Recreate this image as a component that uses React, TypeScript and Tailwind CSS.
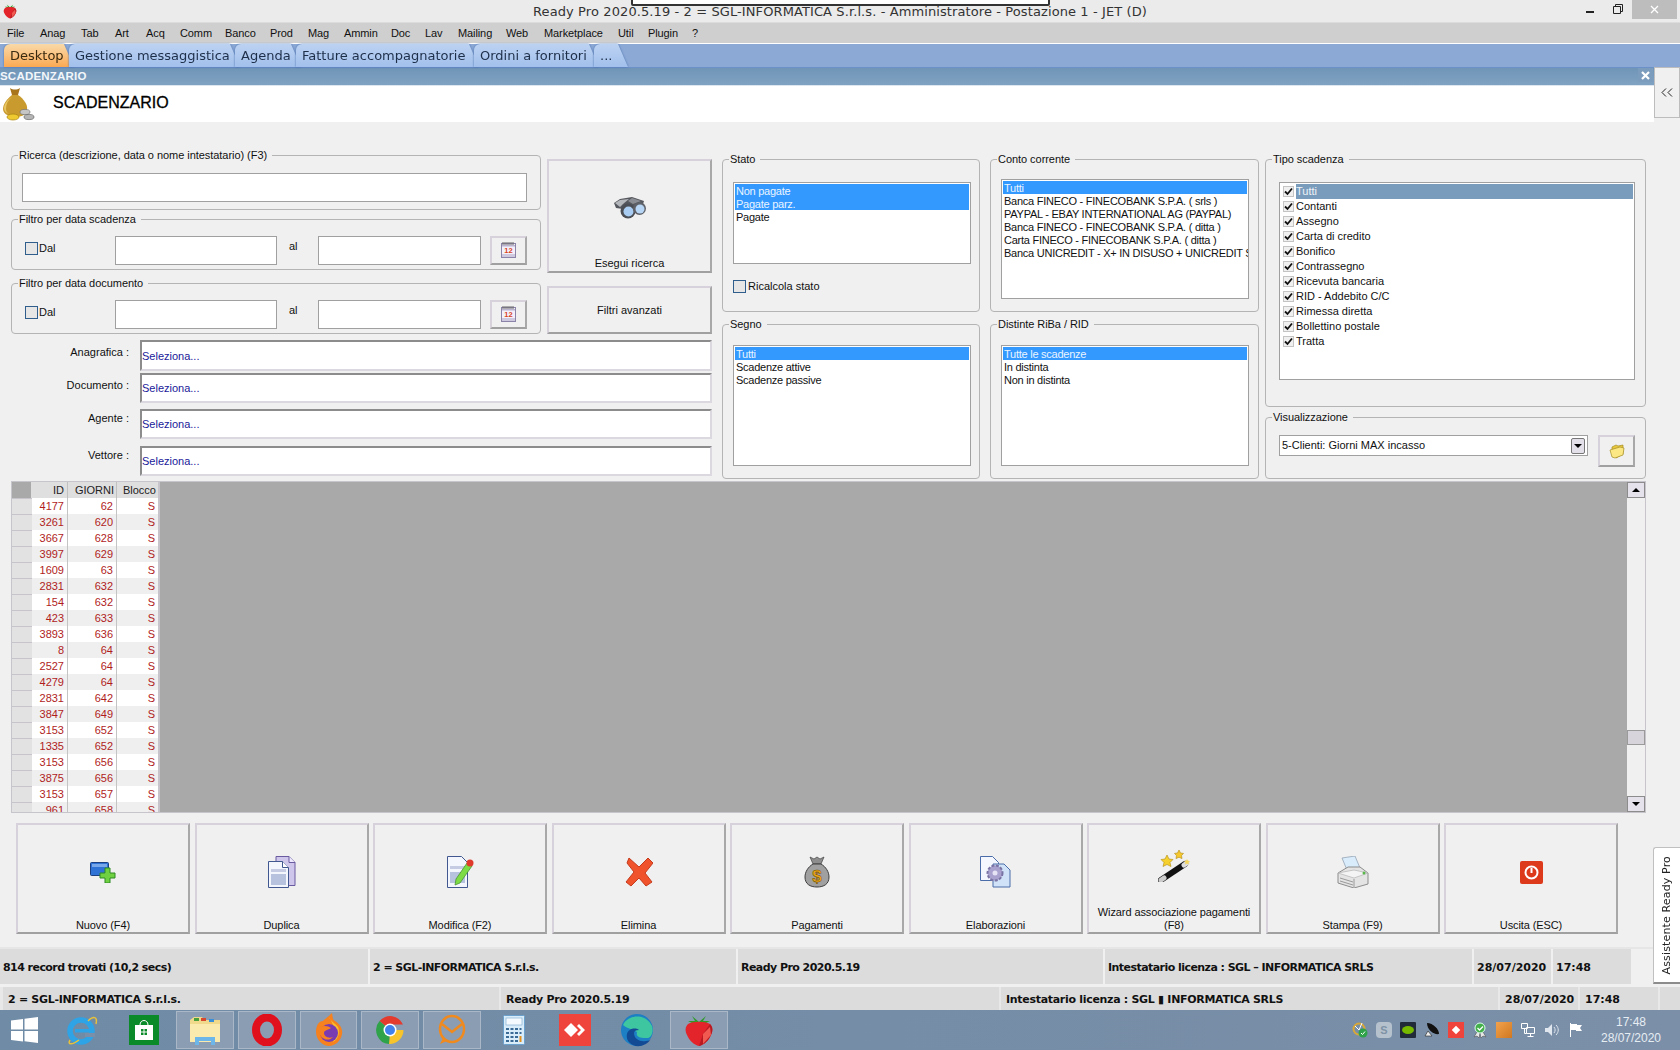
import type { ReactNode } from 'react'

const sans = "[font-family:'Liberation_Sans',sans-serif]"
const wide = "[font-family:'DejaVu_Sans',sans-serif]"

const menuItems = [
  { label: 'File', w: 'w-[33px]' },
  { label: 'Anag', w: 'w-[41px]' },
  { label: 'Tab', w: 'w-[34px]' },
  { label: 'Art', w: 'w-[31px]' },
  { label: 'Acq', w: 'w-[34px]' },
  { label: 'Comm', w: 'w-[45px]' },
  { label: 'Banco', w: 'w-[45px]' },
  { label: 'Prod', w: 'w-[38px]' },
  { label: 'Mag', w: 'w-[36px]' },
  { label: 'Ammin', w: 'w-[47px]' },
  { label: 'Doc', w: 'w-[34px]' },
  { label: 'Lav', w: 'w-[33px]' },
  { label: 'Mailing', w: 'w-[48px]' },
  { label: 'Web', w: 'w-[38px]' },
  { label: 'Marketplace', w: 'w-[74px]' },
  { label: 'Util', w: 'w-[30px]' },
  { label: 'Plugin', w: 'w-[44px]' },
  { label: '?', w: 'w-[20px]' },
]

const tabs = [
  { label: 'Desktop', w: 'w-[70px]', active: true },
  { label: 'Gestione messaggistica', w: 'w-[171px]' },
  { label: 'Agenda', w: 'w-[66px]' },
  { label: 'Fatture accompagnatorie', w: 'w-[183px]' },
  { label: 'Ordini a fornitori', w: 'w-[125px]' },
  { label: '...', w: 'w-[34px]' },
]

const rows = [
  ['4177', '62'], ['3261', '620'], ['3667', '628'], ['3997', '629'], ['1609', '63'],
  ['2831', '632'], ['154', '632'], ['423', '633'], ['3893', '636'], ['8', '64'],
  ['2527', '64'], ['4279', '64'], ['2831', '642'], ['3847', '649'], ['3153', '652'],
  ['1335', '652'], ['3153', '656'], ['3875', '656'], ['3153', '657'], ['961', '658'],
]

const tipi = ['Tutti', 'Contanti', 'Assegno', 'Carta di credito', 'Bonifico', 'Contrassegno', 'Ricevuta bancaria', 'RID - Addebito C/C', 'Rimessa diretta', 'Bollettino postale', 'Tratta']

function Strawberry({ size = 16 }: { size?: number }) {
  return (
    <svg width={size} height={size} viewBox="0 0 32 34">
      <path d="M16 9 9 3l3 5-7 0 6 3Zm0 0 7-6-3 5 7 0-6 3Z" fill="#2f9a2a" />
      <path d="M5 11c5-3 17-3 22 0 3 3 3 7 1 11-2 5-7 10-12 11C11 32 6 27 4 22 2 18 2 14 5 11Z" fill="#e3242b" />
      <path d="M27 11c3 3 3 7 1 11-2 5-7 10-12 11l4-12Z" fill="#b81a22" />
      <path d="M20 21 27 14l1 8-8 9Z" fill="#f05a50" />
    </svg>
  )
}

function GoldBag() {
  return (
    <svg width="34" height="34" viewBox="0 0 34 34">
      <path d="M9 1c3 2 7 2 10 0l-2 7h-6Z" fill="#a8741c" />
      <path d="M11 8h6c6 4 10 10 9 15-1 5-6 7-11 7S2 28 2 22c0-5 4-10 9-14Z" fill="#c99a2e" />
      <path d="M11 10C7 13 5 17 5 22c0 2 1 4 3 5-3-1-5-3-5-6 0-4 4-9 8-11Z" fill="#e8c664" />
      <ellipse cx="12" cy="30" rx="6" ry="3" fill="#eec92f" stroke="#a88410" strokeWidth=".7" />
      <ellipse cx="24" cy="25" rx="5" ry="2.6" fill="#c6c6c6" stroke="#777" strokeWidth=".7" />
      <ellipse cx="28" cy="30" rx="5" ry="2.6" fill="#b5b5b5" stroke="#666" strokeWidth=".7" />
    </svg>
  )
}

function Binoculars() {
  return (
    <svg width="32" height="22" viewBox="0 0 32 22">
      <path d="M0 6 6 2l12-2 12 4-2 6-12 4-7-2-7-1Z" fill="#55585e" />
      <path d="M1 6 6 3l9-1-6 5-3 3Z" fill="#b4b7bc" />
      <path d="M18 1l9 3-8 3-5-3Z" fill="#8a8d93" />
      <circle cx="14" cy="14" r="7.500" fill="#4b4e55" />
      <circle cx="14.500" cy="14.500" r="5" fill="#a9cdf2" />
      <circle cx="25.500" cy="11.500" r="6.500" fill="#5e6168" />
      <circle cx="26" cy="12" r="4.500" fill="#b7d5f5" />
    </svg>
  )
}

function CalendarIcon() {
  return (
    <svg width="15" height="17" viewBox="0 0 15 17">
      <rect x=".5" y="2.5" width="14" height="14" fill="#f4f0fa" stroke="#8c84a8" />
      <path d="M2 1v3M4 1v3M6 1v3M8 1v3M10 1v3M12 1v3" stroke="#666" />
      <rect x="1" y="4" width="13" height="1.5" fill="#b9b3cf" />
      <text x="7.5" y="12" fontSize="7.5" fontWeight="700" textAnchor="middle" fill="#d8431e" fontFamily="Liberation Sans">12</text>
      <rect x="1" y="13" width="13" height="3" fill="#cfc9e0" />
    </svg>
  )
}

function FolderIcon() {
  return (
    <svg width="16" height="15" viewBox="0 0 16 15">
      <path d="M3 5 3 3l4-2 2 1 5-1v9l-7 4Z" fill="#e8c83e" stroke="#a58c22" strokeWidth=".7" />
      <path d="M1 6l10-3 4 1-1 7-8 3-3-1Z" fill="#fbe884" stroke="#a58c22" strokeWidth=".7" />
    </svg>
  )
}

const actions: { label: ReactNode; icon: ReactNode }[] = [
  {
    label: 'Nuovo (F4)',
    icon: (
      <svg width="26" height="21" viewBox="0 0 26 21">
        <rect x=".5" y=".5" width="18" height="13" rx="1" fill="#2f72d6" stroke="#1b3f80" />
        <rect x="2" y="2" width="15" height="3" fill="#79a8ea" />
        <path d="M15 6h5v5h5v5h-5v5h-5v-5h-5v-5h5Z" fill="#6fd142" stroke="#2f8a22" />
      </svg>
    ),
  },
  {
    label: 'Duplica',
    icon: (
      <svg width="28" height="32" viewBox="0 0 28 32">
        <path d="M8 .5h13l6 6v23H8Z" fill="#cfc6ec" stroke="#6a5aa0" />
        <path d="M21 .5v6h6" fill="#efeaff" stroke="#6a5aa0" />
        <path d="M.5 5.5h14l6 6v20H.5Z" fill="#f3f7fd" stroke="#40588f" />
        <path d="M14.5 5.5v6h6" fill="#fff" stroke="#40588f" />
        <rect x="3" y="13" width="15" height="3" fill="#c4cbe2" />
        <rect x="3" y="18" width="15" height="11" fill="#b7c2df" />
      </svg>
    ),
  },
  {
    label: 'Modifica (F2)',
    icon: (
      <svg width="27" height="32" viewBox="0 0 27 32">
        <path d="M.5.5h14l6 6v25H.5Z" fill="#f3f7fd" stroke="#40588f" />
        <rect x="3" y="10" width="15" height="3" fill="#c4cbe2" />
        <rect x="3" y="16" width="15" height="11" fill="#b7c2df" />
        <path d="M20 7l5 3L13 27l-5 2 1-6Z" fill="#7ddb45" stroke="#3d8a2a" strokeWidth=".7" />
        <circle cx="23" cy="7" r="3.500" fill="#df3a2c" />
      </svg>
    ),
  },
  {
    label: 'Elimina',
    icon: (
      <svg width="28" height="30" viewBox="0 0 28 30">
        <path d="M4 1 14 10 23 1l5 5-8 10 7 9-6 4-7-8-8 8-5-4 8-10L2 6Z" fill="#f0532c" stroke="#c53a1c" strokeLinejoin="round" />
      </svg>
    ),
  },
  {
    label: 'Pagamenti',
    icon: (
      <svg width="26" height="32" viewBox="0 0 26 32">
        <path d="M6 1l4 2 3-2 3 2 4-2-3 7H9Z" fill="#8e8e8e" stroke="#444" strokeWidth=".7" />
        <path d="M9 8h8c5 3 8 8 8 13 0 7-5 10-12 10S1 28 1 21c0-5 3-10 8-13Z" fill="#a0a0a0" stroke="#3e3e3e" />
        <text x="13" y="26" fontSize="17" fontWeight="700" textAnchor="middle" fill="#f0a818" stroke="#6a4a00" strokeWidth=".5" fontFamily="Liberation Sans">$</text>
      </svg>
    ),
  },
  {
    label: 'Elaborazioni',
    icon: (
      <svg width="31" height="32" viewBox="0 0 31 32">
        <path d="M.5.5h12l6 6v18H.5Z" fill="#f4f8fe" stroke="#4a6ca8" />
        <path d="M13 8h11l6 6v17H13Z" fill="#cfe2f8" stroke="#4a6ca8" />
        <circle cx="15" cy="17" r="7.500" fill="#a9a2cf" stroke="#7a74a4" strokeDasharray="3 1.5" strokeWidth="2" />
        <circle cx="15" cy="17" r="2.500" fill="#e6e3f4" />
      </svg>
    ),
  },
  {
    label: <>Wizard associazione pagamenti<br />(F8)</>,
    icon: (
      <svg width="32" height="32" viewBox="0 0 32 32">
        <path d="M3 30 27 14" stroke="#111" strokeWidth="6" strokeLinecap="round" />
        <path d="M3 30 6 28" stroke="#ccc" strokeWidth="5" strokeLinecap="round" />
        <path d="M26 15l3-2" stroke="#ddd" strokeWidth="5" strokeLinecap="round" />
        <path d="m9 5 2 4 4 .5-3 3 1 4-4-2-4 2 1-4-3-3 4-.5Z" fill="#f6d02c" stroke="#b08a10" strokeWidth=".6" />
        <path d="m21 0 1.500 3 3 .4-2 2.200.5 3-3-1.400-3 1.400.5-3-2-2.200 3-.4Z" fill="#f6c82c" stroke="#b08a10" strokeWidth=".6" />
        <path d="m29 9 1 1.800 2 .3-1.500 1.500.4 2-1.900-1-1.900 1 .4-2-1.500-1.500 2-.3Z" fill="#f6d85c" />
      </svg>
    ),
  },
  {
    label: 'Stampa (F9)',
    icon: (
      <svg width="32" height="32" viewBox="0 0 32 32">
        <path d="M5 2 18 0l5 12-13 2Z" fill="#d8ecfb" stroke="#8a9aaa" strokeWidth=".7" />
        <path d="M1 17 11 11h12l8 6v11l-14 4L1 27Z" fill="#e4e4e4" stroke="#8c8c8c" />
        <path d="M1 17l16 5 14-5-14-3Z" fill="#f4f4f4" stroke="#aaa" strokeWidth=".6" />
        <path d="M17 23v8M3 22l13 4M3 25l13 4" stroke="#9a9a9a" />
        <circle cx="27" cy="17" r="1.500" fill="#5ab84a" />
      </svg>
    ),
  },
  {
    label: 'Uscita (ESC)',
    icon: (
      <svg width="23" height="23" viewBox="0 0 23 23">
        <rect width="23" height="23" rx="2" fill="#dd3a1c" />
        <circle cx="11.500" cy="11.500" r="6" fill="none" stroke="#fff" strokeWidth="2" />
        <path d="M11.500 7v5" stroke="#fff" strokeWidth="2" />
      </svg>
    ),
  },
]

function Group({ title, className, children }: { title: string; className: string; children?: ReactNode }) {
  return (
    <div className={`relative rounded-[4px] border border-[#b4b4b4] ${className}`}>
      <span className="absolute -top-[8px] left-[6px] bg-[#f0f0f0] pl-px pr-[5px] text-[11px] leading-[14px] tracking-[-0.05px] text-[#111]">{title}</span>
      {children}
    </div>
  )
}

function Input({ className }: { className: string }) {
  return <div className={`border border-[#a0a0a0] bg-white ${className}`} />
}

function Check() {
  return <span className="h-[13px] w-[13px] shrink-0 border border-[#2f5d8c] bg-[#e6e6e6]" />
}

function RaisedButton({ className, children }: { className: string; children?: ReactNode }) {
  return (
    <div className={`border-2 border-t-[#d6d1da] border-l-[#d6d1da] border-r-[#a8a8a8] border-b-[#a0a0a0] bg-[#f0f0f0] ${className}`}>
      {children}
    </div>
  )
}

function ListBox({ items, selected, className }: { items: string[]; selected: number[]; className: string }) {
  return (
    <div className={`overflow-hidden border border-[#a0a0a0] bg-white p-px text-[11px] leading-[15px] tracking-[-0.25px] ${className}`}>
      {items.map((item, i) => (
        <div key={item} className={selected.includes(i) ? 'h-[13px] whitespace-nowrap bg-[#3399ff] pl-px text-[#eaf4ff]' : 'h-[13px] whitespace-nowrap pl-px text-[#111]'}>
          {item}
        </div>
      ))}
    </div>
  )
}

function SelectRow({ label, className, labelTop }: { label: string; className: string; labelTop: string }) {
  return (
    <div className={`flex ${className}`}>
      <div className={`w-[118px] text-right text-[11px] leading-[14px] text-[#111] ${labelTop}`}>{label} :</div>
      <div className="ml-[11px] flex w-[572px] items-center border-2 border-t-[#8c8c8c] border-l-[#8c8c8c] border-r-[#dcd8e0] border-b-[#dcd8e0] bg-white text-[11px] leading-[14px] text-[#1a1a9a]">
        Seleziona...
      </div>
    </div>
  )
}

function DateFilter({ title, className }: { title: string; className: string }) {
  return (
    <Group title={title} className={`flex h-[51px] pl-[13px] pt-[16px] ${className}`}>
      <span className="flex w-[90px] items-start pt-[6px] text-[11px] leading-[13px] text-[#111]"><Check /><span className="ml-px">Dal</span></span>
      <Input className="h-[29px] w-[162px]" />
      <span className="w-[41px] pl-[12px] pt-[2px] text-[11px] leading-[16px] text-[#111]">al</span>
      <Input className="h-[29px] w-[163px]" />
      <RaisedButton className="ml-[9px] flex h-[29px] w-[37px] items-center justify-center pb-[3px]"><CalendarIcon /></RaisedButton>
    </Group>
  )
}

function Cell({ className, children }: { className: string; children?: ReactNode }) {
  return <div className={`flex items-center whitespace-nowrap bg-[#dcdcdc] pt-[4px] text-[#111] ${className}`}>{children}</div>
}

function TaskSlot({ active, children }: { active?: boolean; children: ReactNode }) {
  return (
    <div className="flex h-full w-[61.7px] items-center justify-center px-[2px] py-px">
      <div className={active ? 'flex h-full w-full items-center justify-center border border-[#a9b7c6] bg-[#8a9db2]' : 'flex h-full w-full items-center justify-center'}>
        {children}
      </div>
    </div>
  )
}

export default function App() {
  return (
    <div className={`flex h-[1050px] w-[1680px] flex-col overflow-hidden bg-[#f0f0f0] ${sans}`}>
      {/* window title */}
      <div className="relative flex h-[23px] shrink-0 items-start border-b border-[#dcdcdc] bg-[#ebebeb]">
        <div className="w-[96px] pl-[2px] pt-[3px]"><Strawberry /></div>
        <div className={`flex-1 pt-[3px] text-center text-[13px] leading-[18px] tracking-[0.1px] text-[#333] ${wide}`}>
          Ready Pro 2020.5.19 - 2 = SGL-INFORMATICA S.r.l.s. - Amministratore - Postazione 1 - JET (D)
        </div>
        <div className="flex h-[19px] w-[96px] items-center justify-end pr-[3px]">
          <span className="mr-[19px] mt-[5px] h-[2px] w-[8px] bg-[#222]" />
          <svg width="10" height="10" viewBox="0 0 10 10" className="mr-[9px] -mt-[2px]">
            <path d="M2.500 2V.5h7v7H8M.5 2.500h7v7h-7Z" fill="none" stroke="#222" />
          </svg>
          <div className="flex h-[19px] w-[45px] items-center justify-center bg-[#bdbdbd]">
            <svg width="9" height="9" viewBox="0 0 9 9"><path d="m1 1 7 7M8 1 1 8" stroke="#fff" strokeWidth="1.300" /></svg>
          </div>
        </div>
        <div className="absolute left-[631px] top-[-3px] h-[9px] w-[419px] rounded-[2px] border-2 border-[#333] bg-white" />
      </div>

      {/* menu */}
      <div className="flex h-[20px] shrink-0 items-center bg-[#cfcfcf] pl-[7px] text-[11px] tracking-[-0.1px] text-[#111]">
        {menuItems.map((m) => (
          <div key={m.label} className={m.w}>{m.label}</div>
        ))}
      </div>

      {/* tabs */}
      <div className="flex h-[24px] shrink-0 items-end border-t border-white bg-[#8ca9d6] pl-[4px]">
        {tabs.map((t) => (
          <div key={t.label} className={`-mr-[5px] h-[23px] shrink-0 ${t.w} [filter:drop-shadow(0_0_0.8px_#4f75b0)]`}>
            <div className={`flex h-full items-center rounded-tl-[6px] pl-[6px] pt-px text-[13px] [clip-path:polygon(0_0,calc(100%-10px)_0,100%_100%,0_100%)] ${wide} ${t.active ? 'bg-gradient-to-b from-[#f8d9a8] to-[#fba951] text-[#3a2a10]' : 'bg-gradient-to-b from-[#bcd2f2] to-[#a2c0ec] text-[#1e2f4a]'}`}>
              {t.label}
            </div>
          </div>
        ))}
      </div>

      {/* panel title + header */}
      <div className="flex h-[55px] shrink-0">
        <div className="flex w-[1654px] flex-col">
          <div className="flex h-[18px] items-center justify-between border-t border-[#6c90c8] bg-gradient-to-b from-[#6f95b7] to-[#80a2c2] pr-px text-[11.5px] font-bold tracking-[0.2px] text-[#f2f6fa]">
            <span>SCADENZARIO</span>
            <span className="flex h-[14px] w-[15px] items-center justify-center self-start bg-[#7c9cbd]">
              <svg width="9" height="9" viewBox="0 0 9 9"><path d="m1 1 7 7M8 1 1 8" stroke="#fff" strokeWidth="2.200" /></svg>
            </span>
          </div>
          <div className="flex h-[37px] items-center border-t border-[#dde6ee] bg-white">
            <span className="ml-[1px] w-[52px]"><GoldBag /></span>
            <span className="-mt-[3px] text-[16px] font-normal leading-[20px] text-black [-webkit-text-stroke:0.3px_#000]">SCADENZARIO</span>
          </div>
        </div>
        <div className="flex h-[51px] w-[26px] items-center justify-center border border-[#bdbdbd] bg-[#f0f0f0]">
          <svg width="12" height="9" viewBox="0 0 12 9"><path d="M5 .5 1 4.500 5 8.500M11 .5 7 4.500 11 8.500" fill="none" stroke="#222" /></svg>
        </div>
      </div>

      {/* filters */}
      <div className="mt-[33px] flex h-[324px] shrink-0 pl-[11px]">
        <div className="w-[701px]">
          <div className="flex">
            <div className="w-[530px]">
              <Group title="Ricerca (descrizione, data o nome intestatario) (F3)" className="h-[55px] pl-[10px] pt-[17px]">
                <Input className="h-[29px] w-[505px]" />
              </Group>
              <DateFilter title="Filtro per data scadenza" className="mt-[9px]" />
              <DateFilter title="Filtro per data documento" className="mt-[13px]" />
            </div>
            <div className="ml-[6px] w-[165px] pt-[4px]">
              <RaisedButton className="flex h-[114px] flex-col items-center pt-[36px] text-[11px] text-[#111]">
                <Binoculars />
                <span className="mt-auto">Esegui ricerca</span>
              </RaisedButton>
              <RaisedButton className="mt-[13px] flex h-[48px] items-center justify-center text-[11px] text-[#111]">Filtri avanzati</RaisedButton>
            </div>
          </div>
          <SelectRow label="Anagrafica" labelTop="pt-[5px]" className="mt-[6px] h-[31px]" />
          <SelectRow label="Documento" labelTop="pt-[5px]" className="mt-[2px] h-[30px]" />
          <SelectRow label="Agente" labelTop="pt-[2px]" className="mt-[6px] h-[30px]" />
          <SelectRow label="Vettore" labelTop="pt-[2px]" className="mt-[7px] h-[30px]" />
        </div>

        <div className="ml-[10px] w-[258px] pt-[4px]">
          <Group title="Stato" className="h-[153px] pl-[10px] pt-[22px]">
            <ListBox items={['Non pagate', 'Pagate parz.', 'Pagate']} selected={[0, 1]} className="h-[82px] w-[238px]" />
            <div className="mt-[14px] flex items-center text-[11px] text-[#111]"><Check /><span className="ml-[2px]">Ricalcola stato</span></div>
          </Group>
          <Group title="Segno" className="mt-[12px] h-[155px] pl-[10px] pt-[20px]">
            <ListBox items={['Tutti', 'Scadenze attive', 'Scadenze passive']} selected={[0]} className="h-[121px] w-[238px]" />
          </Group>
        </div>

        <div className="ml-[10px] w-[269px] pt-[4px]">
          <Group title="Conto corrente" className="h-[153px] pl-[10px] pt-[19px]">
            <ListBox
              items={['Tutti', 'Banca FINECO - FINECOBANK S.P.A. ( srls )', 'PAYPAL - EBAY INTERNATIONAL AG (PAYPAL)', 'Banca FINECO - FINECOBANK S.P.A. ( ditta )', 'Carta FINECO - FINECOBANK S.P.A. ( ditta )', 'Banca UNICREDIT - X+ IN DISUSO + UNICREDIT S.P.A.']}
              selected={[0]}
              className="h-[120px] w-[248px]"
            />
          </Group>
          <Group title="Distinte RiBa / RID" className="mt-[12px] h-[155px] pl-[10px] pt-[20px]">
            <ListBox items={['Tutte le scadenze', 'In distinta', 'Non in distinta']} selected={[0]} className="h-[121px] w-[248px]" />
          </Group>
        </div>

        <div className="ml-[6px] w-[381px] pt-[4px]">
          <Group title="Tipo scadenza" className="h-[248px] pl-[13px] pt-[22px]">
            <div className="h-[198px] w-[356px] border border-[#a0a0a0] bg-white pl-[3px] pr-px pt-px text-[11px] leading-[15px] text-[#111]">
              {tipi.map((t, i) => (
                <div key={t} className="flex h-[15px] items-center">
                  <span className="flex h-[11px] w-[11px] items-center justify-center border border-[#c4c4c4] bg-[#f0f0f0]">
                    <svg width="9" height="9" viewBox="0 0 9 9"><path d="m1 4.500 2.500 2.500L8 1.500" fill="none" stroke="#111" strokeWidth="1.800" /></svg>
                  </span>
                  <span className={i === 0 ? 'ml-[2px] h-[15px] flex-1 bg-[#7a9cbc] text-[#eef3f8]' : 'ml-[2px]'}>{t}</span>
                </div>
              ))}
            </div>
          </Group>
          <Group title="Visualizzazione" className="mt-[10px] flex h-[62px] pl-[13px] pt-[17px]">
            <div className="flex h-[21px] w-[309px] items-center justify-between border border-[#a0a0a0] bg-white pl-[2px] pr-[2px] text-[11px] text-[#111]">
              <span>5-Clienti: Giorni MAX incasso</span>
              <span className="flex h-[16px] w-[14px] items-center justify-center rounded-[2px] border border-[#777] bg-[#e4e0ea]">
                <span className="h-0 w-0 border-x-[4px] border-t-[4px] border-x-transparent border-t-black" />
              </span>
            </div>
            <RaisedButton className="ml-[10px] flex h-[32px] w-[37px] items-center justify-center"><FolderIcon /></RaisedButton>
          </Group>
        </div>
      </div>

      {/* grid */}
      <div className="ml-[11px] mt-[2px] flex h-[332px] w-[1635px] shrink-0 overflow-hidden border border-[#c8c4cc] bg-[#a9a9a9]">
        <div className="w-[146px] shrink-0 overflow-hidden text-[11px] leading-[16px]">
          <div className="flex h-[16px] bg-[#dfdfdf] text-[#222]">
            <div className="w-[20px] border-r border-[#dfdfdf] bg-[#a9a9a9]" />
            <div className="w-[36px] border-r border-[#c0c0c0] pr-[3px] text-right">ID</div>
            <div className="w-[49px] border-r border-[#c0c0c0] pr-[2px] text-right">GIORNI</div>
            <div className="w-[41px] pr-[2px] text-right">Blocco</div>
          </div>
          {rows.map((r, i) => (
            <div key={i} className={`flex h-[16px] text-[#b01c1c] ${i % 2 ? 'bg-[#efefef]' : 'bg-white'}`}>
              <div className="w-[20px] border-t border-[#c8c4cc] bg-[#e2e2e2]" />
              <div className="w-[36px] border-r border-[#c4c4c4] pr-[3px] text-right">{r[0]}</div>
              <div className="w-[49px] border-r border-[#c4c4c4] pr-[3px] text-right">{r[1]}</div>
              <div className="w-[41px] pr-[3px] text-right">S</div>
            </div>
          ))}
        </div>
        <div className="flex-1 border-l-2 border-[#c8c4cc] bg-[#a9a9a9]" />
        <div className="flex w-[18px] shrink-0 flex-col bg-[#f0f0f0]">
          <div className="flex h-[16px] items-center justify-center border border-[#8c8c8c] bg-[#e6e2ec]">
            <span className="h-0 w-0 border-x-[4px] border-b-[4px] border-x-transparent border-b-black" />
          </div>
          <div className="mt-[232px] h-[15px] border border-[#9a9a9a] bg-[#d8d4dc]" />
          <div className="mt-auto flex h-[16px] items-center justify-center border border-[#8c8c8c] bg-[#e6e2ec]">
            <span className="h-0 w-0 border-x-[4px] border-t-[4px] border-x-transparent border-t-black" />
          </div>
        </div>
      </div>

      {/* actions, status and side tab */}
      <div className="flex h-[174px] shrink-0 pt-[10px]">
        <div className="w-[1653px] shrink-0">
          <div className="ml-[16px] grid w-[1602px] grid-cols-9 gap-[4.5px]">
            {actions.map((a, i) => (
              <RaisedButton key={i} className="flex h-[111px] flex-col items-center text-center text-[11px] leading-[13px] tracking-[-0.1px] text-[#111]">
                <div className="flex h-[94px] min-h-0 shrink items-center justify-center">{a.icon}</div>
                <div className="mt-auto shrink-0">{a.label}</div>
              </RaisedButton>
            ))}
          </div>
          <div className={`mt-[13px] flex h-[37px] gap-[2px] border-t-2 border-[#e6e6e6] text-[11px] font-bold tracking-[-0.55px] ${wide}`}>
            <Cell className="w-[368px] pl-[3px]">814 record trovati (10,2 secs)</Cell>
            <Cell className="w-[366px] pl-[3px]">2 = SGL-INFORMATICA S.r.l.s.</Cell>
            <Cell className="w-[365px] pl-[3px]">Ready Pro 2020.5.19</Cell>
            <Cell className="w-[367px] pl-[3px]">Intestatario licenza : SGL – INFORMATICA SRLS</Cell>
            <Cell className="w-[77px] pl-[3px] tracking-normal">28/07/2020</Cell>
            <Cell className="w-[78px] pl-[3px] tracking-normal">17:48</Cell>
          </div>
        </div>
        <div className="mt-[24px] flex h-[137px] w-[27px] items-center justify-center rounded-tl-[3px] border-l border-t border-b-2 border-[#c0c0c0] border-b-[#8c8c8c] bg-white">
          <span className={`rotate-180 whitespace-nowrap text-[11px] tracking-[0.15px] text-[#222] [writing-mode:vertical-rl] ${wide}`}>Assistente Ready Pro</span>
        </div>
      </div>

      {/* second status */}
      <div className={`flex h-[23px] shrink-0 gap-[2px] bg-[#e8e8e8] pl-[3px] text-[11px] font-bold tracking-[-0.3px] ${wide}`}>
        <Cell className="w-[496px] pl-[5px]">2 = SGL-INFORMATICA S.r.l.s.</Cell>
        <Cell className="w-[498px] pl-[5px]">Ready Pro 2020.5.19</Cell>
        <Cell className="w-[497px] pl-[5px]">Intestatario licenza : SGL ▮ INFORMATICA SRLS</Cell>
        <Cell className="w-[78px] pl-[5px] tracking-normal">28/07/2020</Cell>
        <Cell className="w-[78px] pl-[5px] tracking-normal">17:48</Cell>
        <Cell className="flex-1" />
      </div>

      {/* taskbar */}
      <div className="flex h-[40px] shrink-0 items-center bg-gradient-to-r from-[#6f8ba6] to-[#7b8fa8]">
        <div className="flex h-full w-[51px] items-center justify-center pr-[3px]">
          <svg width="27" height="26" viewBox="0 0 27 26"><path d="M0 3.500 12 2v10.500H0ZM13.500 1.800 27 0v12.500H13.500ZM0 14h12v10.500L0 23ZM13.500 14H27v12l-13.500-1.800Z" fill="#fff" /></svg>
        </div>
        <TaskSlot>
          <svg width="32" height="32" viewBox="0 0 32 32">
            <circle cx="15" cy="17" r="11" fill="none" stroke="#2ea3e6" strokeWidth="5.500" />
            <rect x="9" y="15" width="17" height="3.500" fill="#2ea3e6" />
            <rect x="19" y="19" width="10" height="4" fill="#7b8fa8" />
            <path d="M4 26C1 31 6 31 13 26M22 7c5-5 10-5 8 3" fill="none" stroke="#e8c23a" strokeWidth="1.500" />
          </svg>
        </TaskSlot>
        <TaskSlot>
          <div className="flex h-[30px] w-[30px] items-center justify-center bg-[#0a8a28]">
            <svg width="20" height="22" viewBox="0 0 20 22">
              <path d="M6 6c0-6 8-6 8 0" fill="none" stroke="#fff" />
              <path d="M1 6h18v15H1Z" fill="#fff" />
              <path d="M7 10h2.500v2.500H7ZM10.500 10H13v2.500h-2.500ZM7 13.500h2.500V16H7ZM10.500 13.500H13V16h-2.500Z" fill="#0a8a28" />
            </svg>
          </div>
        </TaskSlot>
        <TaskSlot active>
          <svg width="32" height="32" viewBox="0 0 32 32">
            <path d="M1 6 5 3h8l2 3h16v22H1Z" fill="#f1d98c" />
            <path d="M1 10h30v18H1Z" fill="#fbeaae" />
            <path d="M5 4h5v3H5Z" fill="#4aa03c" /><path d="M12 4h5v3h-5Z" fill="#d8482c" /><path d="M20 5h5v3h-5Z" fill="#3a90d8" />
            <path d="M6 23h20v8h-4v-4H10v4H6Z" fill="#6cb6ea" />
          </svg>
        </TaskSlot>
        <TaskSlot active>
          <svg width="30" height="32" viewBox="0 0 30 32">
            <ellipse cx="15" cy="16" rx="11" ry="12.500" fill="none" stroke="#e0101c" strokeWidth="8" />
          </svg>
        </TaskSlot>
        <TaskSlot active>
          <svg width="32" height="34" viewBox="0 0 32 34">
            <path d="M3 19C3 11 7 8 10 8c3-3 5-4 9-8 1 4 0 6 3 8 5 3 8 8 7 13-1 7-7 12-13 12S3 27 3 19Z" fill="#f5811f" />
            <path d="M16 4c1 4 6 6 9 10 2 4 1 12-5 15 5-8 0-18-4-25Z" fill="#fbbf2c" />
            <circle cx="16" cy="20" r="9" fill="#7a3bb0" />
            <path d="M6 15c5-3 9-2 12 0-3 2-7 2-7 5 0 3 4 6 9 4-4 5-15 3-14-9Z" fill="#f5811f" />
          </svg>
        </TaskSlot>
        <TaskSlot active>
          <svg width="30" height="30" viewBox="0 0 30 30">
            <path d="M15 15 4.500 6A14 14 0 0 1 28 9.500H15Z" fill="#e33b2e" />
            <path d="M15 15h13.500A14 14 0 0 1 14 29Z" fill="#f7c52b" />
            <path d="M15 15 14 29A14 14 0 0 1 4.500 6Z" fill="#2fa24a" />
            <circle cx="15" cy="15" r="6.500" fill="#fff" />
            <circle cx="15" cy="15" r="5" fill="#3f82ee" />
          </svg>
        </TaskSlot>
        <TaskSlot active>
          <svg width="30" height="32" viewBox="0 0 30 32">
            <ellipse cx="15" cy="15" rx="12" ry="13" fill="none" stroke="#f08a1e" strokeWidth="2.500" />
            <path d="M5 10l10 8 10-8" fill="none" stroke="#f08a1e" strokeWidth="2.500" />
            <path d="M6 24 3 30l7-3" fill="#f08a1e" />
          </svg>
        </TaskSlot>
        <TaskSlot>
          <svg width="22" height="30" viewBox="0 0 22 30">
            <rect x=".5" y=".5" width="21" height="29" rx="1" fill="#d9ecfa" stroke="#6aa0cc" />
            <rect x="3" y="3" width="16" height="7" fill="#f4fafe" stroke="#7aa8cc" strokeWidth=".6" />
            <path d="M3 13h3v2H3Zm4.500 0h3v2h-3Zm4.500 0h3v2h-3Zm4.500 0h2v2h-2ZM3 17h3v2H3Zm4.500 0h3v2h-3Zm4.500 0h3v2h-3Zm4.500 0h2v2h-2ZM3 21h3v2H3Zm4.500 0h3v2h-3Zm4.500 0h3v2h-3ZM3 25h3v2H3Zm4.500 0h3v2h-3Zm4.500 0h3v2h-3Z" fill="#3a6a96" />
            <path d="M16.500 21h2v6h-2Z" fill="#e09020" />
          </svg>
        </TaskSlot>
        <TaskSlot>
          <div className="flex h-[32px] w-[32px] items-center justify-center bg-[#ef443b]">
            <svg width="22" height="14" viewBox="0 0 22 14">
              <path d="M7 0l7 7-7 7-7-7Z" fill="#fff" />
              <path d="M15 1l6 6-6 6-2-2 4-4-4-4Z" fill="#fff" />
            </svg>
          </div>
        </TaskSlot>
        <TaskSlot>
          <svg width="34" height="34" viewBox="0 0 34 34">
            <circle cx="17" cy="17" r="16" fill="#1d7fc4" />
            <path d="M3 12C8 1 26 0 32 13c2 6-1 13-6 12-8 0-10-2-9-6-5-3-11-4-14-7Z" fill="#3ec6a0" />
            <path d="M14 20c0 6 6 9 12 8 3 0 4-1 5-2-4 6-12 9-18 6C8 30 6 25 7 21c1-5 8-7 12-4-3 0-5 1-5 3Z" fill="#124a94" />
          </svg>
        </TaskSlot>
        <TaskSlot active><Strawberry size={34} /></TaskSlot>

        <div className="ml-auto flex h-full items-center">
          <div className="flex w-[24px] justify-center">
            <svg width="16" height="16" viewBox="0 0 16 16"><circle cx="7" cy="7" r="5.500" fill="none" stroke="#d8a838" strokeWidth="2" /><circle cx="11" cy="11" r="4.500" fill="#2fa24a" /><path d="m9 11 1.500 1.500L13 9.500M3 4l4 4 3-7" fill="none" stroke="#fff" /></svg>
          </div>
          <div className="flex w-[24px] justify-center">
            <span className="flex h-[16px] w-[16px] items-center justify-center rounded-[4px] bg-[#b5c2ce] text-[11px] font-bold text-[#7f92a6]">S</span>
          </div>
          <div className="flex w-[24px] justify-center">
            <span className="flex h-[16px] w-[16px] items-center justify-center rounded-[1px] bg-[#202a38]">
              <span className="h-[8px] w-[12px] rounded-[50%] bg-[#76b900]" />
            </span>
          </div>
          <div className="flex w-[24px] justify-center">
            <svg width="16" height="16" viewBox="0 0 16 16"><path d="M3 1c6 0 12 6 12 11-5 1-12-4-12-11Z" fill="#111" /><path d="M4 9l-3 5h7Z" fill="#eee" stroke="#222" strokeWidth=".6" /></svg>
          </div>
          <div className="flex w-[24px] justify-center">
            <span className="flex h-[16px] w-[16px] items-center justify-center bg-[#ef443b]"><span className="h-[6px] w-[6px] rotate-45 bg-white" /></span>
          </div>
          <div className="flex w-[24px] justify-center">
            <svg width="16" height="16" viewBox="0 0 16 16"><path d="M5 10 2 15l3-1 2 2 1-5ZM11 10l3 5-3-1-2 2-1-5Z" fill="#e6e6e6" stroke="#444" strokeWidth=".5" /><circle cx="8" cy="6" r="5" fill="#43b04a" stroke="#dfe" /><path d="m5.500 6 2 2L11 4.500" fill="none" stroke="#fff" strokeWidth="1.300" /></svg>
          </div>
          <div className="flex w-[24px] justify-center">
            <span className="h-[16px] w-[16px] bg-gradient-to-br from-[#f2a24a] to-[#d07820]" />
          </div>
          <div className="flex w-[24px] justify-center">
            <svg width="16" height="16" viewBox="0 0 16 16"><path d="M1.500 1.500h6v5h-6ZM6.500 5.500h8v6h-8ZM10.500 11.500v3M7.500 14.500h6M4.500 6.500v5h2" fill="none" stroke="#fff" /></svg>
          </div>
          <div className="flex w-[24px] justify-center">
            <svg width="16" height="16" viewBox="0 0 16 16"><path d="M1 6h3l4-4v12l-4-4H1Z" fill="#dfe6ee" /><path d="M10 5c1.500 2 1.500 4 0 6M12 3c3 3 3 7 0 10" fill="none" stroke="#dfe6ee" /></svg>
          </div>
          <div className="flex w-[24px] justify-center">
            <svg width="16" height="16" viewBox="0 0 16 16"><path d="M2.500 1v14" stroke="#fff" /><path d="M3 2h6v1h5l-2 3 2 3H8V8H3Z" fill="#fff" /></svg>
          </div>
          <div className="w-[92px] pr-[6px] text-center text-[12px] leading-[16px] text-[#e6edf3]">
            <div>17:48</div>
            <div>28/07/2020</div>
          </div>
        </div>
      </div>
    </div>
  )
}
